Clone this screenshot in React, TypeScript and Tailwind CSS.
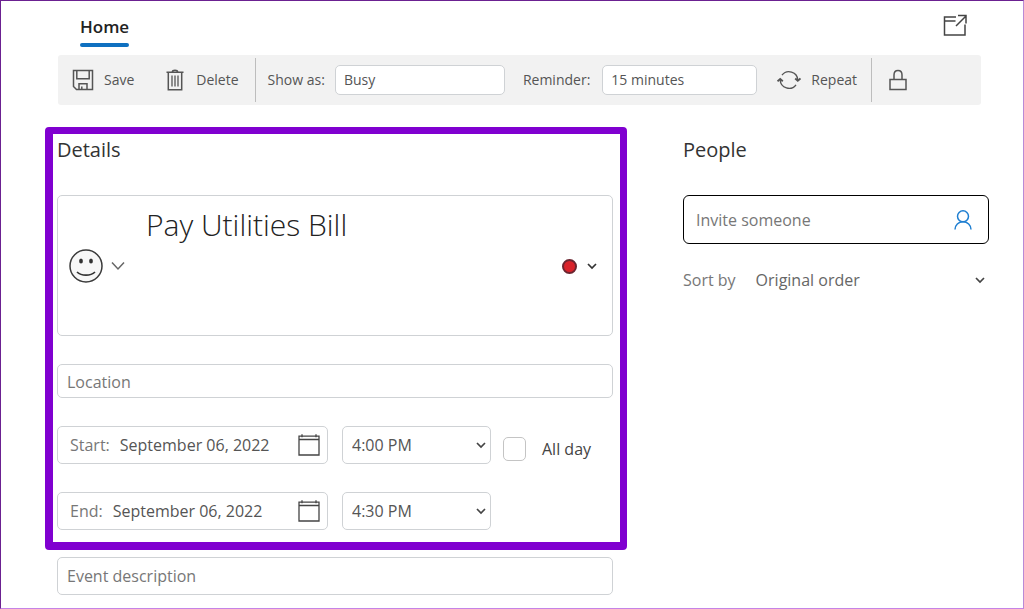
import React, { useState } from 'react';

const Chevron: React.FC<{ className?: string }> = ({ className = '' }) => (
  <svg
    viewBox="0 0 10 10"
    className={`pointer-events-none h-[10px] w-[10px] fill-none stroke-current ${className}`}
    strokeWidth="1.7"
    aria-hidden="true"
  >
    <path d="M1 3l4 4 4-4" />
  </svg>
);

const SaveIcon = () => (
  <svg viewBox="0 0 22 22" className="h-[22px] w-[22px] fill-none stroke-current" strokeWidth="1.5" aria-hidden="true">
    <path d="M1.5 1.5h19v19H4.5l-3-3z" />
    <path d="M4.8 1.5v8.3h12.4V1.5M7 20.5v-5.8h8v5.8M9.8 17.5v3" />
  </svg>
);

const DeleteIcon = () => (
  <svg viewBox="0 0 18 22" className="h-[22px] w-[18px] fill-none stroke-current" strokeWidth="1.5" aria-hidden="true">
    <path d="M.5 3.2h17M2.3 3.2v17.5h13.4V3.2M6.2 3c.3-2.400 5.300-2.400 5.600 0" />
    <path d="M6 6.5v11M9 6.5v11M12 6.5v11" strokeWidth="1.3" />
  </svg>
);

const RepeatIcon = () => (
  <svg viewBox="0 0 24 20" className="h-5 w-6 fill-none stroke-current" strokeWidth="1.4" aria-hidden="true">
    <path d="M5 5.200A8.800 8.800 0 0 1 20.800 10M19 14.800A8.800 8.800 0 0 1 3.200 10" />
    <path d="M18.200 8.500l2.600 2.300 2.700-2.300M.5 11.300l2.700-2.300 2.600 2.300" strokeWidth="1.900" />
  </svg>
);

const LockIcon = () => (
  <svg viewBox="0 0 18 22" className="h-[22px] w-[18px] fill-none stroke-current" strokeWidth="1.5" aria-hidden="true">
    <path d="M1 10.5h16v10H1zM5 10.5V6c0-6 8-6 8 0v4.5" />
  </svg>
);

const PopOutIcon = () => (
  <svg viewBox="0 0 24 22" className="h-[22px] w-6 fill-none stroke-current" strokeWidth="1.5" aria-hidden="true">
    <path d="M13 3H1.500v18h20.500V10.500M1.500 7h11" />
    <path d="M13 12L23 2M15 1.500h8v8" />
  </svg>
);

const CalendarIcon = () => (
  <svg viewBox="0 0 22 22" className="h-[22px] w-[22px] fill-none stroke-current" strokeWidth="1.3" aria-hidden="true">
    <path d="M1 2.2h20V21H1zM1 5.500h20M4 .3v3M18 .3v3" />
  </svg>
);

const SmileIcon = () => (
  <svg viewBox="0 0 34 34" className="h-[34px] w-[34px]" aria-hidden="true">
    <circle cx="17" cy="17" r="16" className="fill-[#f7f7f7] stroke-[#3a3a3a]" strokeWidth="1.5" />
    <ellipse cx="12" cy="12" rx="1.9" ry="2.6" className="fill-[#333]" />
    <ellipse cx="22" cy="12" rx="1.9" ry="2.6" className="fill-[#333]" />
    <path d="M8 23c4.500 4.200 13.500 4.200 18 0" className="fill-none stroke-[#333]" strokeWidth="1.7" />
  </svg>
);

const PersonIcon = () => (
  <svg viewBox="0 0 18 20" className="h-5 w-[18px] fill-none stroke-[#1f7fd1]" strokeWidth="1.5" aria-hidden="true">
    <circle cx="9" cy="6.3" r="5.5" />
    <path d="M1 19.500c0-4.500 3.500-7.700 8-7.700s8 3.200 8 7.700" />
  </svg>
);

const fieldBox = 'rounded-[5px] border border-[#cfd2d5] bg-white';

interface DateRowProps {
  id: string;
  label: string;
  date: string;
  times: string[];
  children?: React.ReactNode;
}

const DateRow: React.FC<DateRowProps> = ({ id, label, date, times, children }) => (
  <div className="flex items-center">
    <div className={`${fieldBox} flex h-[38px] min-w-0 flex-1 items-center gap-[10px] pr-[7px] pl-3`}>
      <label htmlFor={`${id}-date`} className="text-[#777]">{label}</label>
      <input id={`${id}-date`} defaultValue={date} className="w-0 min-w-0 flex-1 text-[#555] outline-none" />
      <button type="button" aria-label={`${label} calendar`} className="text-[#444]">
        <CalendarIcon />
      </button>
    </div>
    <div className="relative ml-[14px] w-[149px]">
      <select
        aria-label={`${label} time`}
        className={`${fieldBox} h-[38px] w-full appearance-none px-[9px] text-[#555] outline-none`}
      >
        {times.map((time) => (
          <option key={time}>{time}</option>
        ))}
      </select>
      <Chevron className="absolute top-[14px] right-[5px] text-[#444]" />
    </div>
    <div className="flex w-[122px] items-center">{children}</div>
  </div>
);

const Toolbar = () => (
  <div className="mr-[8px] ml-[13px] flex h-[50px] items-center rounded-[3px] bg-[#f2f2f2] pl-[14px] text-sm text-[#555]">
    <button type="button" className="flex items-center gap-[10px]">
      <SaveIcon />
      Save
    </button>
    <button type="button" className="ml-8 flex items-center gap-3">
      <DeleteIcon />
      Delete
    </button>
    <div className="ml-4 h-[44px] w-px bg-[#bdbdbd]" />
    <label htmlFor="show-as" className="ml-3">Show as:</label>
    <select id="show-as" className={`${fieldBox} ml-[10px] h-[30px] w-[170px] appearance-none px-2 outline-none`}>
      <option>Busy</option>
      <option>Free</option>
    </select>
    <label htmlFor="reminder" className="ml-[18px]">Reminder:</label>
    <select id="reminder" className={`${fieldBox} ml-3 h-[30px] w-[155px] appearance-none px-2 outline-none`}>
      <option>15 minutes</option>
      <option>30 minutes</option>
    </select>
    <button type="button" className="ml-5 flex items-center gap-[10px]">
      <RepeatIcon />
      Repeat
    </button>
    <div className="ml-[14px] h-[44px] w-px bg-[#bdbdbd]" />
    <button type="button" aria-label="Private" className="ml-[17px]">
      <LockIcon />
    </button>
  </div>
);

const App: React.FC = () => {
  const [title, setTitle] = useState('Pay Utilities Bill');
  const [allDay, setAllDay] = useState(false);

  return (
    <main className="flex min-h-screen flex-col border border-t-[#6b2191] border-r-[#b98ad6] border-b-[#c583e6] border-l-[#6b2191] bg-white pr-[34px] pl-[44px] font-['Open_Sans','Noto_Sans',sans-serif] text-base text-[#555]">
      <header className="flex h-[54px] items-start justify-between pr-[22px] pl-[35px]">
        <a href="#home" className="flex flex-col pt-[14px] text-[17px] font-semibold text-[#222]">
          <span className="leading-6">Home</span>
          <span className="mt-1 h-1 rounded-full bg-[#0f70c0]" />
        </a>
        <button type="button" aria-label="Open in new window" className="mt-[13px] text-[#444]">
          <PopOutIcon />
        </button>
      </header>

      <Toolbar />

      <div className="mt-[22px] grid grid-cols-[582fr_306fr] gap-[56px]">
        <div>
          <section className="rounded-[4px] border-[7px] border-b-8 border-l-8 border-[#8000d0] pr-[7px] pb-3 pl-1">
            <h2 className="mt-[2px] mb-[31px] text-xl leading-7 text-[#333]">Details</h2>

            <div className={`${fieldBox} h-[141px]`}>
              <input
                aria-label="Event name"
                value={title}
                onChange={(e) => setTitle(e.target.value)}
                className="mt-[7px] ml-[88px] block h-[42px] w-[300px] text-[30px] font-light text-[#222] outline-none"
              />
              <div className="mt-1 flex items-center justify-between pr-[15px] pl-[11px]">
                <button type="button" aria-label="Choose icon" className="flex items-center gap-2 text-[#666]">
                  <SmileIcon />
                  <svg viewBox="0 0 14 10" className="h-[10px] w-[14px] fill-none stroke-current" strokeWidth="1.5" aria-hidden="true">
                    <path d="M1 1.500l6 6.500 6-6.500" />
                  </svg>
                </button>
                <button type="button" aria-label="Choose calendar" className="flex items-center gap-[10px] text-[#333]">
                  <span className="h-[15px] w-[15px] rounded-full border-2 border-[#6b2530] bg-[#d9222a]" />
                  <Chevron />
                </button>
              </div>
            </div>

            <input
              aria-label="Location"
              placeholder="Location"
              className={`${fieldBox} mt-7 block h-[34px] w-full px-[9px] pt-[2px] outline-none placeholder:text-[#777]`}
            />

            <div className="mt-7 flex flex-col gap-7">
              <DateRow id="start" label="Start:" date="September 06, 2022" times={['4:00 PM', '4:30 PM', '5:00 PM']}>
                <input
                  id="all-day"
                  type="checkbox"
                  checked={allDay}
                  onChange={(e) => setAllDay(e.target.checked)}
                  className="mt-2 ml-3 h-6 w-[23px] appearance-none rounded-[5px] border border-[#c4c4c4] checked:bg-[#0f70c0]"
                />
                <label htmlFor="all-day" className="mt-2 ml-4 whitespace-nowrap text-[#444]">All day</label>
              </DateRow>
              <DateRow id="end" label="End:" date="September 06, 2022" times={['4:30 PM', '5:00 PM', '5:30 PM']} />
            </div>
          </section>

          <div className="pt-[7px] pr-[14px] pb-3 pl-3">
            <input
              aria-label="Event description"
              placeholder="Event description"
              className={`${fieldBox} block h-[38px] w-full px-[9px] outline-none placeholder:text-[#777]`}
            />
          </div>
        </div>

        <section>
          <h2 className="mt-[9px] mb-[31px] text-xl leading-7 text-[#333]">People</h2>
          <div className="flex h-[49px] items-center rounded-[6px] border border-black pr-4 pl-3">
            <input
              aria-label="Invite someone"
              placeholder="Invite someone"
              className="min-w-0 flex-1 outline-none placeholder:text-[#777]"
            />
            <button type="button" aria-label="Browse contacts">
              <PersonIcon />
            </button>
          </div>
          <div className="relative mt-6 flex items-center">
            <label htmlFor="sort-by" className="text-[#777]">Sort by</label>
            <select id="sort-by" className="ml-5 flex-1 appearance-none text-[#666] outline-none">
              <option>Original order</option>
              <option>Name</option>
            </select>
            <Chevron className="absolute right-[4px] text-[#444]" />
          </div>
        </section>
      </div>
    </main>
  );
};

export default App;
